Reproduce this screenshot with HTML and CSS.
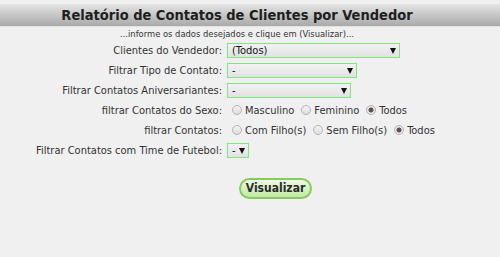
FILE: index.html
```html
<!DOCTYPE html>
<html lang="pt-BR">
<head>
  <meta charset="UTF-8">
  <meta name="viewport" content="width=device-width, initial-scale=1.0">
  <title>Relatório de Contatos de Clientes por Vendedor</title>
  <link rel="stylesheet" href="styles.css">
</head>
<body>
  <h1 class="titulo">Relatório de Contatos de Clientes por Vendedor</h1>
  <p class="instrucao">...informe os dados desejados e clique em (Visualizar)...</p>

  <form class="filtros" id="relForm">
    <label class="rotulo" for="vendedor">Clientes do Vendedor:</label>
    <span class="campo">
      <span class="combo combo-vendedor">
        <select id="vendedor" name="vendedor"><option>(Todos)</option></select>
      </span>
    </span>

    <label class="rotulo" for="tipo">Filtrar Tipo de Contato:</label>
    <span class="campo">
      <span class="combo combo-tipo">
        <select id="tipo" name="tipo"><option>-</option></select>
      </span>
    </span>

    <label class="rotulo" for="aniv">Filtrar Contatos Aniversariantes:</label>
    <span class="campo">
      <span class="combo combo-aniv">
        <select id="aniv" name="aniv"><option>-</option></select>
      </span>
    </span>

    <span class="rotulo">filtrar Contatos do Sexo:</span>
    <span class="campo">
      <label class="opcao"><input type="radio" name="sexo" value="M">Masculino</label>
      <label class="opcao"><input type="radio" name="sexo" value="F">Feminino</label>
      <label class="opcao"><input type="radio" name="sexo" value="T" checked>Todos</label>
    </span>

    <span class="rotulo">filtrar Contatos:</span>
    <span class="campo">
      <label class="opcao"><input type="radio" name="filhos" value="C">Com Filho(s)</label>
      <label class="opcao"><input type="radio" name="filhos" value="S">Sem Filho(s)</label>
      <label class="opcao"><input type="radio" name="filhos" value="T" checked>Todos</label>
    </span>

    <label class="rotulo" for="time">Filtrar Contatos com Time de Futebol:</label>
    <span class="campo">
      <span class="combo combo-time">
        <select id="time" name="time"><option>-</option></select>
      </span>
    </span>
  </form>

  <div class="acoes">
    <button type="submit" form="relForm" class="botao">Visualizar</button>
  </div>
</body>
</html>
```

FILE: styles.css
```css
body {
  margin: 0;
  background-color: #f0f0f0;
  font-family: "DejaVu Sans Condensed", "DejaVu Sans", Verdana, sans-serif;
  color: #333;
}
.titulo {
  margin: 4px 0 0;
  padding-right: 26px;
  height: 22px;
  line-height: 22px;
  font-size: 14.5px;
  font-weight: bold;
  text-align: center;
  color: #1e1e1e;
  background: linear-gradient(#e4e4e4, #a9a9a9);
  border-bottom: 1px solid #e2e2e2;
}
.instrucao {
  margin: 0;
  padding-right: 26px;
  height: 13px;
  line-height: 14px;
  font-size: 9.3px;
  text-align: center;
  color: #333;
}
.filtros {
  display: grid;
  grid-template-columns: 222px auto;
  grid-auto-rows: 20px;
  column-gap: 5px;
  align-items: center;
  font-size: 11px;
}
.rotulo {
  text-align: right;
  white-space: nowrap;
}
.campo {
  display: flex;
  align-items: center;
  white-space: nowrap;
}
.combo {
  position: relative;
  display: inline-block;
  height: 15px;
}
.combo select {
  appearance: none;
  -webkit-appearance: none;
  box-sizing: border-box;
  width: 100%;
  height: 15px;
  margin: 0;
  padding: 0 0 0 4px;
  border: 1px solid #7de87d;
  border-radius: 0;
  background: linear-gradient(#f2f2f2, #e2e2e2);
  font-family: inherit;
  font-size: 11px;
  line-height: 13px;
  color: #111;
  outline: none;
}
.combo::after {
  content: "";
  position: absolute;
  right: 4px;
  top: 5px;
  border-left: 3px solid transparent;
  border-right: 3px solid transparent;
  border-top: 6px solid #111;
  pointer-events: none;
}
.combo-vendedor { width: 173px; }
.combo-tipo { width: 130px; }
.combo-aniv { width: 124px; }
.combo-time { width: 22px; }
.opcao {
  display: inline-flex;
  align-items: center;
  margin-right: 2px;
}
.opcao input {
  appearance: none;
  -webkit-appearance: none;
  width: 10px;
  height: 10px;
  margin: 0 3px 0 5px;
  border: 1px solid #b4b4b4;
  border-radius: 50%;
  background: linear-gradient(#f4f4f4, #dcdcdc);
}
.opcao input:checked {
  background: radial-gradient(circle, #555 0, #555 2.2px, #e6e6e6 2.8px);
}
.acoes {
  margin-top: 17px;
  padding-left: 239px;
}
.botao {
  height: 21px;
  width: 73px;
  padding: 0;
  font-family: inherit;
  font-size: 12px;
  font-weight: bold;
  color: #2b2b2b;
  background: linear-gradient(#eef9e4, #c2e8a6);
  border: 2px solid #86cc5a;
  border-radius: 11px;
  cursor: pointer;
}
.botao:hover {
  background: linear-gradient(#dff4cc, #a9dc86);
}
```
